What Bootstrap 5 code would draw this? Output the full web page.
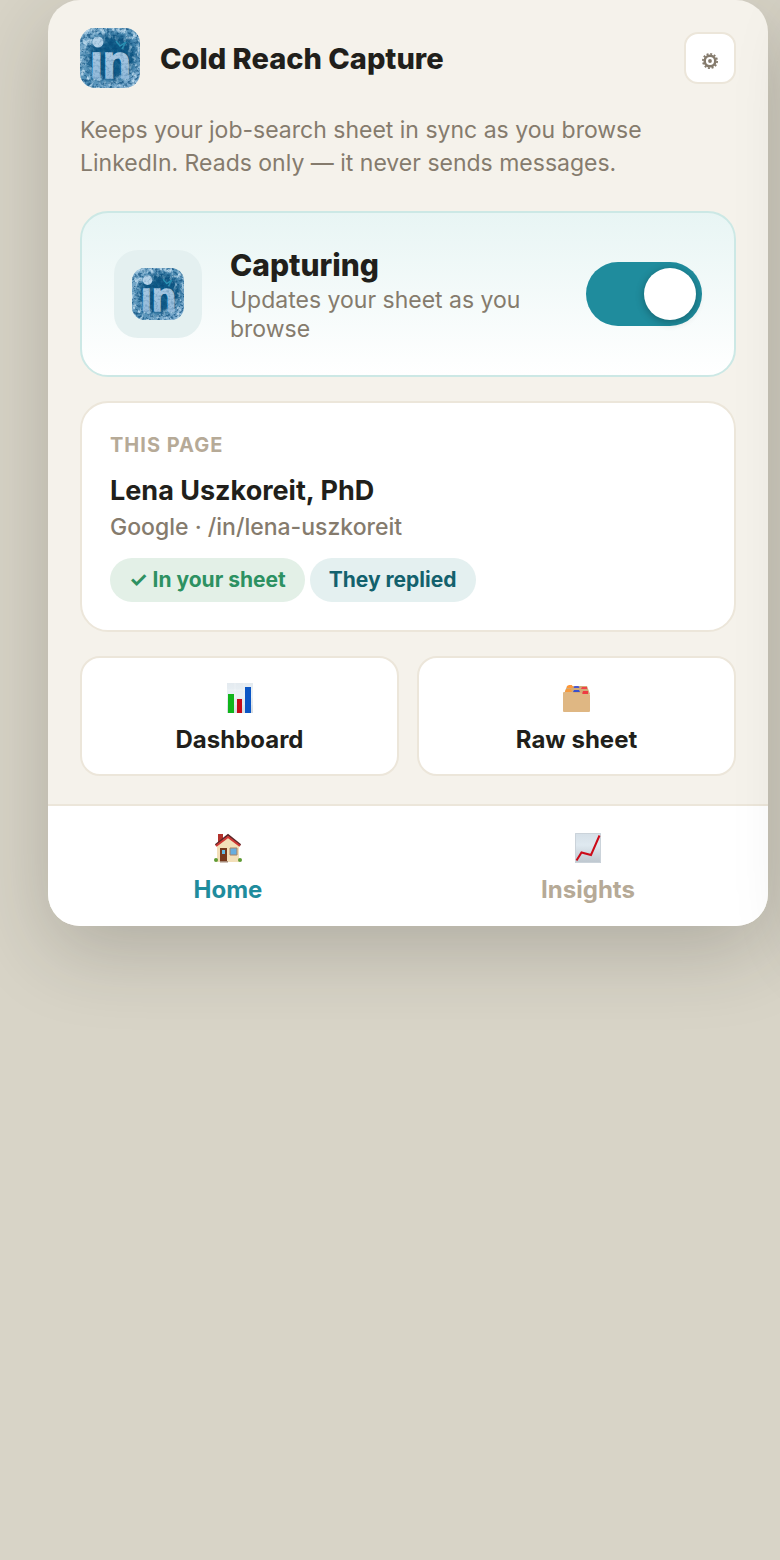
<!doctype html>
<html lang="en">
<head>
<meta charset="utf-8">
<meta name="viewport" content="width=device-width, initial-scale=1">
<title>Cold Reach Capture</title>
<link href="https://cdn.jsdelivr.net/npm/bootstrap@5.3.0/dist/css/bootstrap.min.css" rel="stylesheet">
<style>
  :root { --ink: #211f1b; --muted: #857b6d; --faint: #b6aa97; --line: #ece6da; --teal: #1f8c9d; --drop: 0 24px 80px rgba(33, 31, 27, .22); }
  body { font-family: Inter, "Open Sans", sans-serif; font-size: 23px; color: var(--ink); background: #d8d4c7; }
  .stage { padding: 0 12px 0 48px; min-height: 100vh; overflow: hidden; }
  .popup { position: relative; background: #f5f2eb; border-radius: 32px; box-shadow: var(--drop); }
  .popup::after { content: ""; position: absolute; top: 0; bottom: 0; left: calc(100% + 48px); width: 100%; border-radius: 32px; box-shadow: var(--drop); pointer-events: none; }
  .popup-body { padding: 28px 32px; }
  .topbar { gap: 20px; }
  .app-title { font-size: 29px; line-height: 36px; font-weight: 800; padding-top: 2px; }
  .app-logo { width: 60px; height: 60px; }
  .gear-btn { width: 52px; height: 52px; border: 2px solid var(--line); border-radius: 14px; background: #fff; color: var(--muted); padding: 6px 0 0; }
  .intro { margin: 26px 0 31px; line-height: 33px; color: var(--muted); }
  .panel { border: 2px solid var(--line); border-radius: 28px; background: #fff; }
  .capture { border-color: #cce8e5; background: linear-gradient(#e8f5f4, #fff); padding: 31px 32px; gap: 28px; margin-bottom: 24px; }
  .tile { width: 88px; height: 88px; border-radius: 24px; background: #e4f0f0; }
  .capture-title { font-size: 30px; line-height: 42px; font-weight: 800; }
  .capture-note { line-height: 29px; color: var(--muted); }
  .form-check-input.toggle { width: 116px; height: 64px; margin: 0; border: 0; border-radius: 32px; padding: 6px; background: #d8d4c7; display: flex; cursor: pointer; }
  .form-check-input.toggle::before { content: ""; width: 52px; height: 52px; border-radius: 50%; background: #fff; box-shadow: 0 2px 8px rgba(0, 0, 0, .3); }
  .form-check-input.toggle:checked { background: var(--teal); justify-content: flex-end; }
  .page-info { padding: 28px; margin-bottom: 24px; }
  .eyebrow { font-size: 20px; line-height: 28px; font-weight: 700; letter-spacing: 1px; color: var(--faint); margin-bottom: 14px; }
  .person { font-size: 27px; line-height: 36px; font-weight: 700; }
  .source { line-height: 33px; font-weight: 500; color: var(--muted); margin: 2px 0 14px; }
  .tag { font-size: 21px; line-height: 44px; font-weight: 700; padding: 0 19px; border-radius: 22px; }
  .tag-green { background: #e3f0e7; color: #2d9162; }
  .tag-teal { background: #e4f0f0; color: #13616d; }
  .tags { gap: 5px; }
  .shortcuts { gap: 18px; }
  .shortcut { border: 2px solid var(--line); border-radius: 20px; background: #fff; color: var(--ink); padding: 22px 8px 18px; }
  .shortcut, .tab { font-size: 24px; line-height: 32px; font-weight: 700; gap: 8px; }
  .pic { width: 36px; height: 36px; }
  .tabs { background: #fff; border-top: 2px solid var(--line); border-radius: 0 0 32px 32px; }
  .tab { padding: 24px 8px 20px; color: var(--faint); }
  .tab.active { color: var(--teal); }
</style>
</head>
<body>
<svg width="0" height="0" class="position-absolute" aria-hidden="true">
  <defs>
    <linearGradient id="ice" x1="0" y1="0" x2="1" y2="1"><stop offset="0" stop-color="#86b4d2"/><stop offset=".5" stop-color="#4f8db4"/><stop offset="1" stop-color="#86b2d4"/></linearGradient>
    <radialGradient id="deep"><stop offset="0" stop-color="#075785"/><stop offset=".7" stop-color="#0b5481" stop-opacity=".9"/><stop offset="1" stop-color="#1a6796" stop-opacity="0"/></radialGradient>
    <linearGradient id="snow" x1="0" y1="0" x2="0" y2="1"><stop offset="0" stop-color="#b4d0e6"/><stop offset="1" stop-color="#8ab4d7"/></linearGradient>
    <filter id="frost" x="0" y="0" width="1" height="1" color-interpolation-filters="sRGB"><feTurbulence type="fractalNoise" baseFrequency=".23 .17" numOctaves="4" seed="5"/><feColorMatrix values="0 0 0 0 .76  0 0 0 0 .87  0 0 0 0 .94  4 0 0 0 -1.9"/></filter>
    <filter id="shade" x="0" y="0" width="1" height="1" color-interpolation-filters="sRGB"><feTurbulence type="fractalNoise" baseFrequency=".27 .35" numOctaves="4" seed="21"/><feColorMatrix values="0 0 0 0 .04  0 0 0 0 .3  0 0 0 0 .48  4 0 0 0 -1.9"/></filter>
    <radialGradient id="rim"><stop offset=".5" stop-color="#fff" stop-opacity=".1"/><stop offset="1" stop-color="#fff" stop-opacity=".9"/></radialGradient>
    <mask id="edge"><rect width="60" height="60" fill="url(#rim)"/></mask>
    <clipPath id="block"><rect width="60" height="60" rx="15"/></clipPath>
    <linearGradient id="paper" x1="0" y1="0" x2="0" y2="1"><stop offset="0" stop-color="#d5dfe7"/><stop offset=".4" stop-color="#dfe9f0"/><stop offset="1" stop-color="#bdc6ce"/></linearGradient>
    <symbol id="logo" viewBox="0 0 60 60">
      <g clip-path="url(#block)">
        <rect width="60" height="60" fill="url(#ice)"/>
        <ellipse cx="32" cy="29" rx="29" ry="28" fill="url(#deep)"/>
        <rect width="60" height="60" filter="url(#shade)" opacity=".6"/>
        <g mask="url(#edge)"><rect width="60" height="60" filter="url(#frost)"/></g>
        <path d="M36 13l4 5 6-4-4 7" fill="none" stroke="#2b93b5" stroke-width="1.5"/>
        <circle cx="18" cy="14" r="5.500" fill="#b4d2e8"/>
        <text x="10" y="50" font-family="Liberation Sans, sans-serif" font-weight="700" font-size="46" fill="url(#snow)" stroke="url(#snow)" stroke-width="1.500">ın</text>
        <rect width="60" height="60" filter="url(#shade)" opacity=".22"/>
      </g>
    </symbol>
  </defs>
</svg>
<div class="stage">
  <main class="popup">
    <div class="popup-body">
      <header class="topbar d-flex align-items-center">
        <svg class="app-logo flex-shrink-0" role="img" aria-label="Cold Reach Capture logo"><use href="#logo"/></svg>
        <h1 class="app-title flex-grow-1 mb-0">Cold Reach Capture</h1>
        <button type="button" class="gear-btn d-flex align-items-center justify-content-center" aria-label="Settings">
          <svg width="16" height="16" viewBox="0 0 16 16" fill="none" stroke="currentColor" aria-hidden="true"><circle cx="8" cy="8" r="5.3" stroke-width="2.500"/><circle cx="8" cy="8" r="7.1" stroke-width="1.8" stroke-dasharray="2 1.717"/><circle cx="8" cy="8" r="1.9" fill="currentColor" stroke="none"/></svg>
        </button>
      </header>
      <p class="intro">Keeps your job-search sheet in sync as you browse LinkedIn. Reads only — it never sends messages.</p>

      <section class="panel capture d-flex align-items-center">
        <div class="tile d-flex align-items-center justify-content-center flex-shrink-0"><svg width="52" height="52" aria-hidden="true"><use href="#logo"/></svg></div>
        <label for="capturing" class="flex-grow-1">
          <span class="capture-title d-block">Capturing</span>
          <span class="capture-note d-block">Updates your sheet as you browse</span>
        </label>
        <input class="form-check-input toggle flex-shrink-0" type="checkbox" role="switch" id="capturing" checked>
      </section>

      <section class="panel page-info">
        <div class="eyebrow">THIS PAGE</div>
        <h2 class="person mb-0">Lena Uszkoreit, PhD</h2>
        <div class="source">Google · /in/lena-uszkoreit</div>
        <div class="tags d-flex flex-wrap"><span class="tag tag-green">✓ In your sheet</span><span class="tag tag-teal">They replied</span></div>
      </section>

      <div class="shortcuts d-flex">
        <button type="button" class="shortcut d-flex flex-column align-items-center flex-fill w-50">
          <svg class="pic" viewBox="0 0 36 36" aria-hidden="true"><rect x="5" y="3" width="26" height="30" fill="url(#paper)" opacity=".65"/><path d="M5 10h26M5 17h26M5 24h26M13 3v30M22 3v30" stroke="#fff" stroke-width=".5" opacity=".6"/><path d="M6 14h6v19H6z" fill="#10b51b"/><path d="M15 19h5v14h-5z" fill="#c60a18"/><path d="M23 7h6v26h-6z" fill="#0b56c5"/></svg>
          Dashboard
        </button>
        <button type="button" class="shortcut d-flex flex-column align-items-center flex-fill w-50">
          <svg class="pic" viewBox="0 0 36 36" aria-hidden="true"><path d="M5 14l3-8h20l3 8z" fill="#d3aa77"/><path d="M8 8V6l2-1h3l1 3z" fill="#ff9838"/><path d="M14.500 8l1-2h4l1 2z" fill="#4a58cf"/><path d="M22 9l1-2h5v2z" fill="#f0434a"/><path d="M6 12l1-3h5l1 3z" fill="#f79a3d"/><path d="M14 12l1-2h5l1 2z" fill="#3a50cc"/><path d="M23 14l1-3h5v3z" fill="#ee3b43"/><path d="M5 12h8l2 1h7l2 1h6q1 0 1 1v16q0 1-1 1H5q-1 0-1-1V13q0-1 1-1z" fill="#dfb783"/></svg>
          Raw sheet
        </button>
      </div>
    </div>

    <nav class="tabs d-flex" aria-label="Sections">
      <a href="#home" class="tab active w-50 d-flex flex-column align-items-center text-decoration-none" aria-current="page">
        <svg class="pic" viewBox="0 0 36 36" aria-hidden="true"><path d="M8 4h5v8H8z" fill="#b2322c"/><path d="M7 15l11-9 11 9v17H7z" fill="#f3dfb9"/><path d="M5.500 15L18 5l12.500 10" fill="none" stroke="#5b2628" stroke-width="2"/><path d="M6 16L18 7l12 9" fill="none" stroke="#cf3734" stroke-width="2"/><path d="M10 18h7v13h-7z" fill="#75371c"/><path d="M12 20h3v4h-3z" fill="#62b9e5"/><path d="M20 18h7v7h-7z" fill="#67aee0" stroke="#a68267"/><path d="M10 31h8v1.500h-8z" fill="#a58b78"/><ellipse cx="6" cy="30" rx="2" ry="2" fill="#5f9b35"/><ellipse cx="30" cy="30" rx="2" ry="2" fill="#5f9b35"/></svg>
        Home
      </a>
      <a href="#insights" class="tab w-50 d-flex flex-column align-items-center text-decoration-none">
        <svg class="pic" viewBox="0 0 36 36" aria-hidden="true"><rect x="5" y="3" width="26" height="30" fill="url(#paper)"/><path d="M5.500 3.500h25v29h-25z" fill="none" stroke="#cbd3da"/><path d="M6.500 30.500l5-8 9.500 2.500L29.500 5.500" fill="none" stroke="#cc0b19" stroke-width="2"/></svg>
        Insights
      </a>
    </nav>
  </main>
</div>
<script src="https://cdn.jsdelivr.net/npm/bootstrap@5.3.0/dist/js/bootstrap.bundle.min.js"></script>
</body>
</html>
